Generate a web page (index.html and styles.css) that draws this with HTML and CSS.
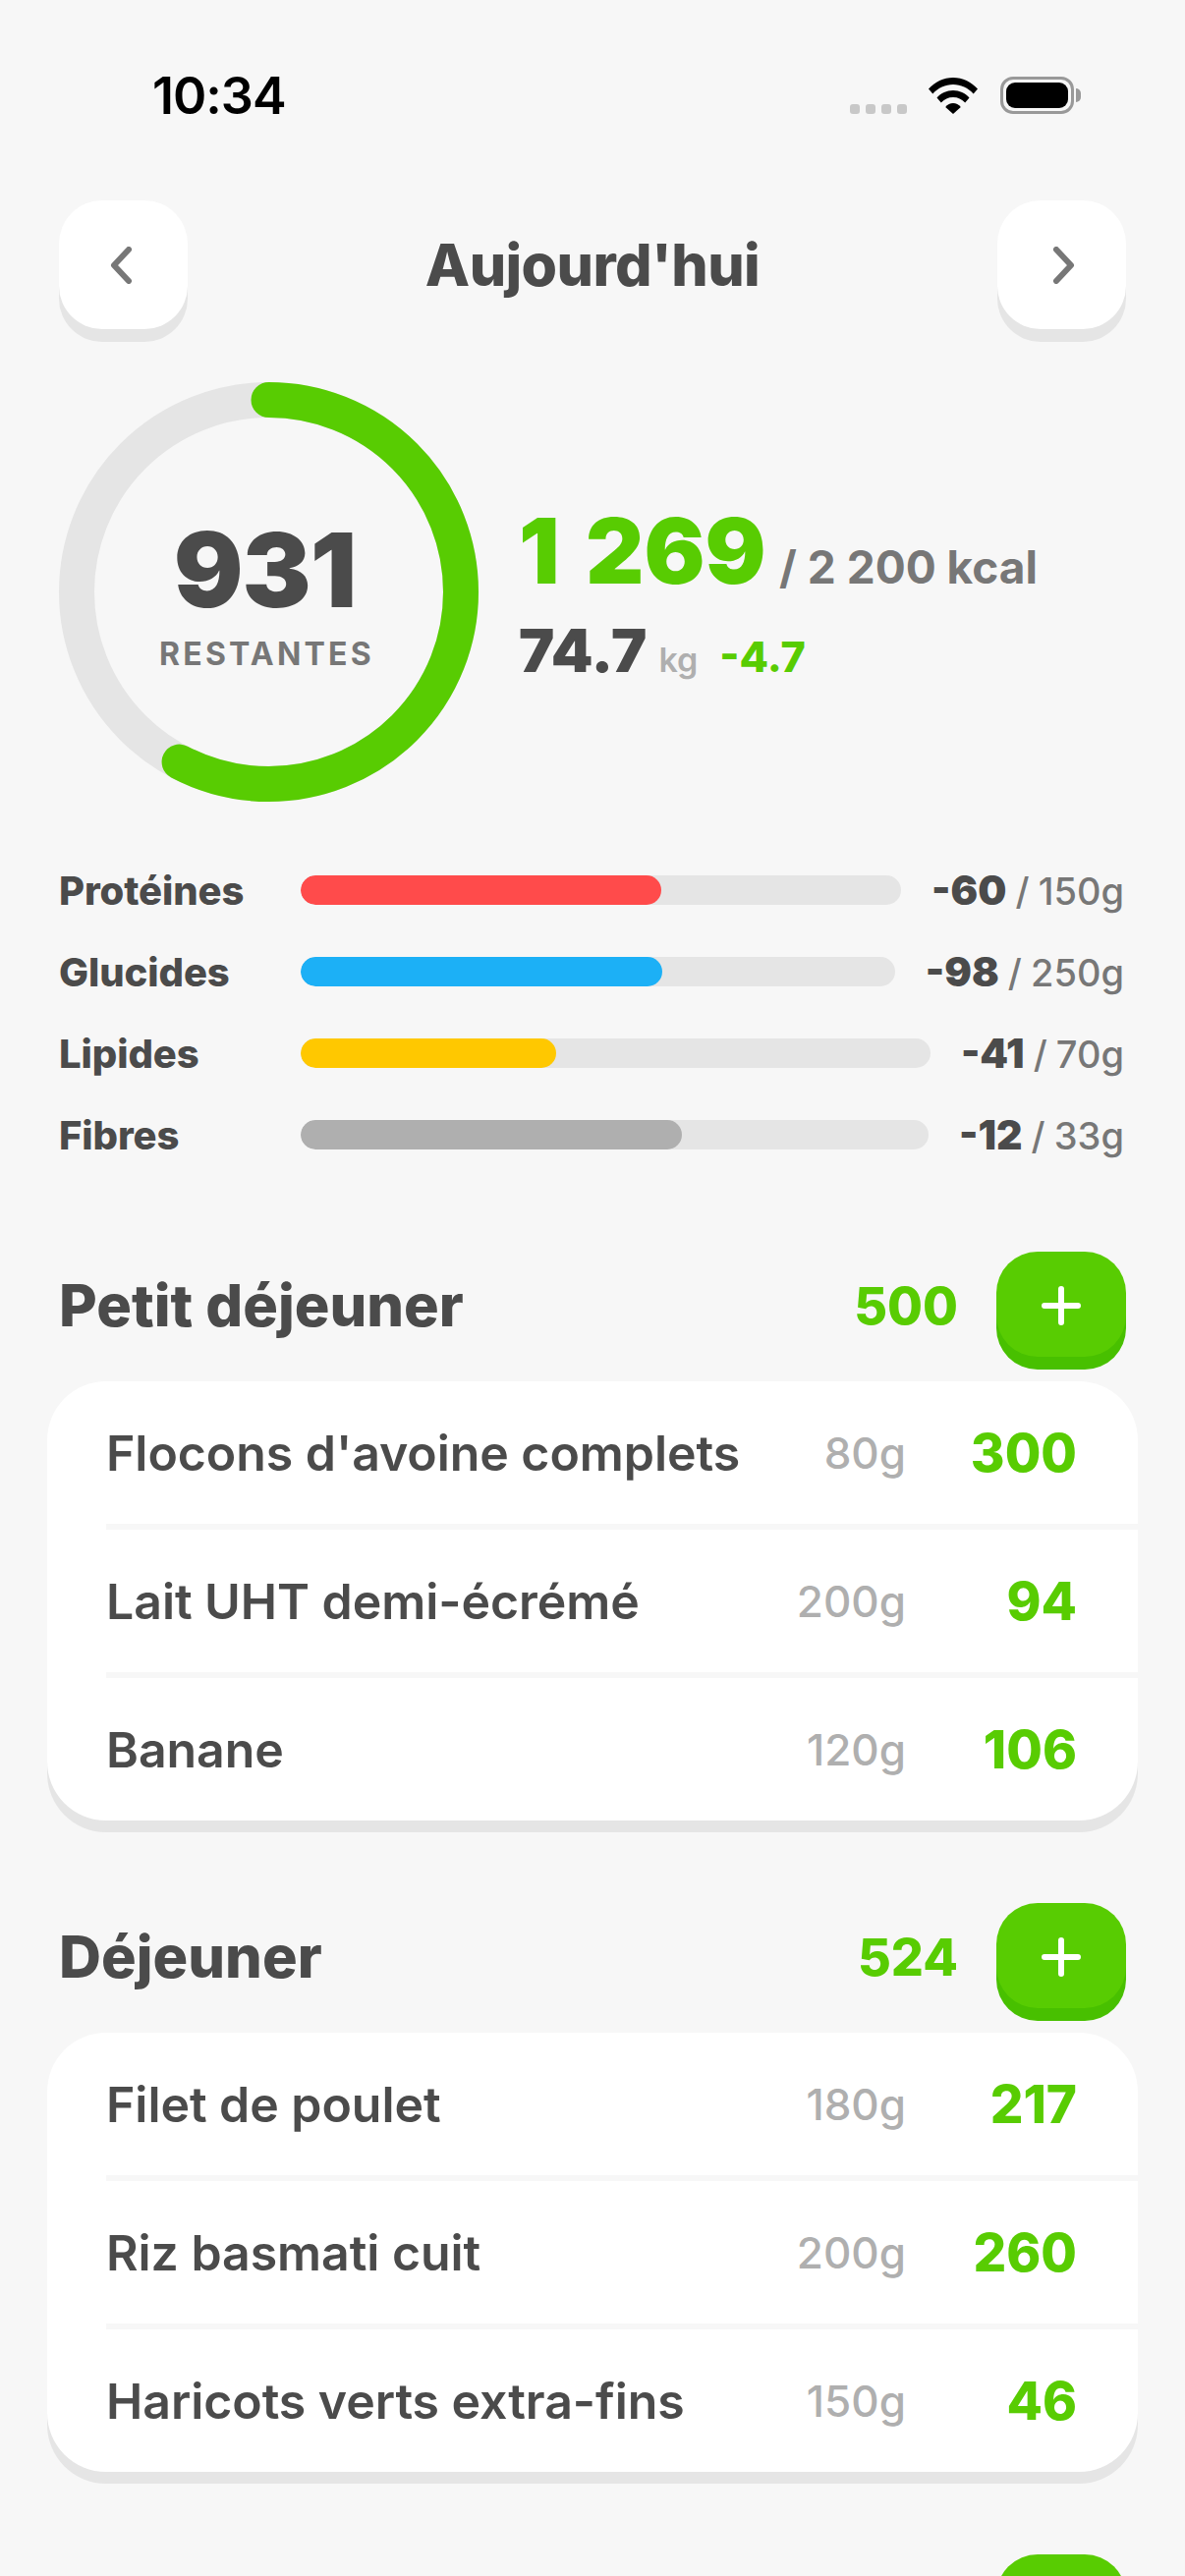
FILE: index.html
```html
<!DOCTYPE html>
<html lang="fr">
<head>
  <meta charset="UTF-8" />
  <meta name="viewport" content="width=device-width, initial-scale=1.0"/>
  <title>Aujourd'hui</title>
  <link rel="stylesheet" href="styles.css">
</head>
<body>
  <div class="page">
    <div class="statusbar">
      <span class="time">10:34</span>
      <div class="status-icons">
        <div class="dots"><i></i><i></i><i></i><i></i></div>
        <svg class="wifi" width="50" height="37" viewBox="0 0 50 37">
          <path d="M0 11.500C6.500 4.300 15.300 0 25 0s18.500 4.300 25 11.500l-4.300 5C40.300 10.500 33 7 25 7S9.700 10.500 4.300 16.500z"/>
          <path d="M8.500 20.500C12.700 15.800 18.500 13 25 13s12.300 2.800 16.500 7.500l-4.300 5C34.100 22 29.800 20 25 20s-9.100 2-12.200 5.500z"/>
          <path d="M17.200 30C19.200 27.600 22 26 25 26s5.800 1.600 7.800 4L25 37z"/>
        </svg>
        <div class="battery"><div class="battery-level"></div></div>
      </div>
    </div>

    <div class="nav">
      <button class="nav-btn">
        <svg class="chev chev-left" width="24" height="38" viewBox="0 0 24 38"><path d="M20 3 5 19l15 16"/></svg>
      </button>
      <h1>Aujourd'hui</h1>
      <button class="nav-btn">
        <svg class="chev chev-right" width="24" height="38" viewBox="0 0 24 38"><path d="M4 3l15 16L4 35"/></svg>
      </button>
    </div>

    <div class="hero">
      <div class="ring">
        <svg width="427" height="427" viewBox="0 0 427 427">
          <circle class="ring-track" cx="213.500" cy="213.500" r="195.500"/>
          <circle class="ring-fill" cx="213.500" cy="213.500" r="195.500" pathLength="100" stroke-dasharray="57.700 100" transform="rotate(-90 213.500 213.500)"/>
        </svg>
        <div class="ring-text">
          <div class="ring-num">931</div>
          <div class="ring-label">RESTANTES</div>
        </div>
      </div>
      <div class="hero-info">
        <div class="kcal-line"><span class="kcal-eaten">1 269</span> <span class="kcal-goal">/ 2 200 kcal</span></div>
        <div class="weight-line"><span class="weight">74.7</span><span class="weight-unit">kg</span><span class="weight-diff">-4.7</span></div>
      </div>
    </div>

    <div class="macros">
      <div class="macro">
        <span class="macro-name">Protéines</span>
        <div class="track"><div class="fill red" style="width: 60%"></div></div>
        <span class="macro-val"><b>-60</b> / 150g</span>
      </div>
      <div class="macro">
        <span class="macro-name">Glucides</span>
        <div class="track"><div class="fill blue" style="width: 60.800%"></div></div>
        <span class="macro-val"><b>-98</b> / 250g</span>
      </div>
      <div class="macro">
        <span class="macro-name">Lipides</span>
        <div class="track"><div class="fill yellow" style="width: 40.600%"></div></div>
        <span class="macro-val"><b>-41</b> / 70g</span>
      </div>
      <div class="macro">
        <span class="macro-name">Fibres</span>
        <div class="track"><div class="fill grey" style="width: 60.800%"></div></div>
        <span class="macro-val"><b>-12</b> / 33g</span>
      </div>
    </div>

    <section class="meal">
      <div class="meal-head">
        <h2>Petit déjeuner</h2>
        <span class="meal-total">500</span>
        <button class="add-btn"><svg width="40" height="40" viewBox="0 0 40 40"><path d="M20 3v34M3 20h34"/></svg></button>
      </div>
      <div class="card">
        <div class="row"><span class="food">Flocons d'avoine complets</span><span class="grams">80g</span><span class="cal">300</span></div>
        <div class="row"><span class="food">Lait UHT demi-écrémé</span><span class="grams">200g</span><span class="cal">94</span></div>
        <div class="row"><span class="food">Banane</span><span class="grams">120g</span><span class="cal">106</span></div>
      </div>
    </section>

    <section class="meal">
      <div class="meal-head">
        <h2>Déjeuner</h2>
        <span class="meal-total">524</span>
        <button class="add-btn"><svg width="40" height="40" viewBox="0 0 40 40"><path d="M20 3v34M3 20h34"/></svg></button>
      </div>
      <div class="card">
        <div class="row"><span class="food">Filet de poulet</span><span class="grams">180g</span><span class="cal">217</span></div>
        <div class="row"><span class="food">Riz basmati cuit</span><span class="grams">200g</span><span class="cal">260</span></div>
        <div class="row"><span class="food">Haricots verts extra-fins</span><span class="grams">150g</span><span class="cal">46</span></div>
      </div>
    </section>

    <section class="meal">
      <div class="meal-head">
        <span class="meal-total"></span>
        <button class="add-btn"><svg width="40" height="40" viewBox="0 0 40 40"><path d="M20 3v34M3 20h34"/></svg></button>
      </div>
    </section>
  </div>
</body>
</html>
```

FILE: styles.css
```css
* { box-sizing: border-box; margin: 0; padding: 0; }

html, body {
  height: 2622px;
  overflow: hidden;
}

body {
  background: #f7f7f7;
  color: #4b4b4b;
  font-family: Inter, 'Noto Sans', sans-serif;
}

.page { padding: 0 60px; }

button {
  border: none;
  display: flex;
  align-items: center;
  justify-content: center;
}

/* status bar */
.statusbar {
  height: 204px;
  padding: 70px 53px 0 95px;
  display: flex;
  justify-content: space-between;
  align-items: flex-start;
}

.time {
  font-size: 52px;
  line-height: 56px;
  font-weight: 600;
  color: #000;
  letter-spacing: -1px;
}

.status-icons {
  display: flex;
  align-items: flex-end;
  margin-top: 8px;
  height: 38px;
}

.dots {
  display: flex;
  gap: 6px;
  margin-right: 22px;
}

.dots i {
  width: 10px;
  height: 10px;
  border-radius: 3px;
  background: #c8c8c8;
}

.wifi { margin-right: 23px; }
.wifi path { fill: #000; }

.battery {
  width: 75px;
  height: 38px;
  border: 3px solid #999;
  border-radius: 13px;
  padding: 3px;
  position: relative;
}

.battery::after {
  content: "";
  position: absolute;
  right: -10px;
  top: 9px;
  width: 5px;
  height: 14px;
  background: #999;
  border-radius: 0 5px 5px 0;
}

.battery-level {
  height: 100%;
  background: #000;
  border-radius: 9px;
}

/* top nav */
.nav {
  display: flex;
  justify-content: space-between;
  align-items: center;
  height: 131px;
}

h1 {
  font-size: 59px;
  font-weight: 800;
  letter-spacing: -0.6px;
}

.nav-btn {
  width: 131px;
  height: 131px;
  border-radius: 44px;
  background: #fff;
  box-shadow: 0 13px 0 #e5e5e5;
}

.chev path {
  fill: none;
  stroke: #777;
  stroke-width: 6;
  stroke-linecap: round;
  stroke-linejoin: round;
}

.chev-left { margin-right: 6px; }
.chev-right { margin-left: 5px; }

/* ring and totals */
.hero {
  margin-top: 54px;
  display: flex;
  align-items: center;
  gap: 41px;
}

.ring {
  display: grid;
  width: 427px;
  height: 427px;
}

.ring svg, .ring-text { grid-area: 1 / 1; }

.ring-track, .ring-fill {
  fill: none;
  stroke-width: 36;
}

.ring-track { stroke: #e5e5e5; }
.ring-fill { stroke: #58cc02; stroke-linecap: round; }

.ring-text {
  display: flex;
  flex-direction: column;
  align-items: center;
  justify-content: center;
  padding-right: 4px;
}

.ring-num {
  font-size: 105px;
  line-height: 120px;
  font-weight: 900;
  letter-spacing: -1px;
  margin-left: -4px;
}

.ring-label {
  font-size: 32px;
  line-height: 40px;
  font-weight: 700;
  color: #777;
  letter-spacing: 3.200px;
  margin-top: 6px;
}

.hero-info { padding-top: 3px; }

.kcal-eaten {
  font-size: 92px;
  line-height: 100px;
  font-weight: 900;
  color: #58cc02;
  word-spacing: 8px;
}

.kcal-goal {
  font-size: 46px;
  font-weight: 700;
  color: #777;
  margin-left: 9px;
}

.weight-line {
  display: flex;
  align-items: baseline;
  margin-top: 16px;
}

.weight {
  font-size: 61px;
  line-height: 70px;
  font-weight: 900;
}

.weight-unit {
  font-size: 34px;
  font-weight: 600;
  color: #afafaf;
  margin-left: 12px;
}

.weight-diff {
  font-size: 43px;
  font-weight: 800;
  color: #58cc02;
  margin-left: 22px;
}

/* macro bars */
.macros {
  margin-top: 75px;
  display: flex;
  flex-direction: column;
  gap: 53px;
}

.macro {
  height: 30px;
  display: flex;
  align-items: center;
  padding-right: 2px;
}

.macro-name {
  width: 246px;
  font-size: 40px;
  font-weight: 800;
  letter-spacing: -0.1px;
}

.track {
  flex: 1;
  height: 30px;
  border-radius: 15px;
  background: #e5e5e5;
  overflow: hidden;
}

.fill {
  height: 100%;
  border-radius: 15px;
}

.red { background: #ff4b4b; }
.blue { background: #1cb0f6; }
.yellow { background: #ffc800; }
.grey { background: #afafaf; }

.macro-val {
  margin-left: 31px;
  font-size: 38px;
  font-weight: 500;
  color: #777;
  word-spacing: -1px;
}

.macro-val b {
  font-size: 41px;
  font-weight: 900;
  color: #4b4b4b;
}

/* meals */
.meal { margin-bottom: 84px; }
.macros + .meal { margin-top: 104px; }

.meal-head {
  height: 107px;
  margin-bottom: 25px;
  display: flex;
  align-items: center;
}

h2 {
  flex: 1;
  font-size: 59.500px;
  font-weight: 800;
}

.meal-total {
  font-size: 52px;
  font-weight: 800;
  color: #58cc02;
  margin-right: 39px;
  padding-top: 3px;
}

.meal-total:first-child { margin-left: auto; }

.add-btn {
  width: 132px;
  height: 107px;
  padding-top: 3px;
  border-radius: 42px;
  background: #58cc02;
  box-shadow: 0 13px 0 #48c000;
}

.add-btn path {
  fill: none;
  stroke: #fff;
  stroke-width: 6;
  stroke-linecap: round;
}

.card {
  margin: 0 -12px;
  background: #fff;
  border-radius: 60px;
  box-shadow: 0 12px 0 #e5e5e5;
  overflow: hidden;
}

.row {
  height: 151px;
  margin-left: 60px;
  padding: 1px 62px 0 0;
  display: flex;
  align-items: center;
  border-bottom: 6px solid #f7f7f7;
}

.row:last-child {
  height: 145px;
  border-bottom: none;
}

.food {
  flex: 1;
  font-size: 50px;
  font-weight: 600;
  letter-spacing: -0.05px;
}

.grams {
  font-size: 44px;
  font-weight: 500;
  color: #afafaf;
}

.cal {
  width: 174px;
  text-align: right;
  font-size: 53px;
  font-weight: 800;
  color: #58cc02;
}
```
